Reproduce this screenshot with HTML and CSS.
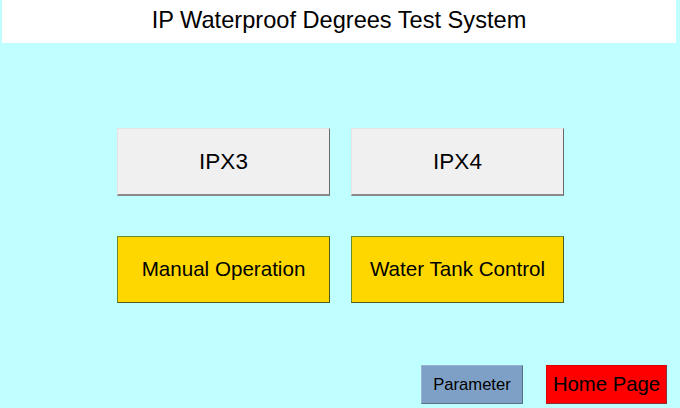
FILE: index.html
```html
<!DOCTYPE html>
<html>
<head>
<meta charset="utf-8">
<link rel="stylesheet" href="styles.css">
</head>
<body>
<div class="screen">
  <header class="title-bar">IP Waterproof Degrees Test System</header>
  <main class="menu">
    <div class="btn btn-gray">IPX3</div>
    <div class="btn btn-gray">IPX4</div>
    <div class="btn btn-yellow">Manual Operation</div>
    <div class="btn btn-yellow">Water Tank Control</div>
  </main>
  <footer class="nav">
    <div class="nav-btn nav-param">Parameter</div>
    <div class="nav-btn nav-home">Home Page</div>
  </footer>
</div>
</body>
</html>
```
FILE: styles.css
```css
html, body {
  margin: 0;
  padding: 0;
}
body {
  background: #bfffff;
  font-family: "Liberation Sans", Arial, sans-serif;
  color: #000;
}
.screen {
  width: 680px;
  height: 408px;
  display: flex;
  flex-direction: column;
  overflow: hidden;
}
.title-bar {
  margin: 0 4px 0 2px;
  height: 43px;
  background: #ffffff;
  display: flex;
  align-items: center;
  justify-content: center;
  font-size: 23.6px;
  padding-bottom: 3px;
  box-sizing: border-box;
}
.menu {
  display: grid;
  grid-template-columns: 213px 213px;
  grid-template-rows: 68px 67px;
  column-gap: 21px;
  row-gap: 40px;
  padding: 85px 0 0 117px;
}
.btn {
  display: flex;
  align-items: center;
  justify-content: center;
  box-sizing: border-box;
}
.btn-gray {
  background: #f0f0f0;
  border-top: 1px solid #e4e4e4;
  border-left: 1px solid #e4e4e4;
  border-right: 1px solid #6a6a6a;
  border-bottom: 2px solid #8a8a8a;
  font-size: 22.5px;
}
.btn-yellow {
  background: #ffd700;
  border: 1px solid #6b8a2a;
  border-right-color: #4d5a20;
  border-bottom-color: #4d5a20;
  font-size: 20.6px;
  padding-bottom: 2px;
}
.nav {
  display: flex;
  justify-content: flex-end;
  gap: 23px;
  padding-right: 13px;
  margin-top: 62px;
}
.nav-btn {
  height: 39px;
  display: flex;
  align-items: center;
  justify-content: center;
  box-sizing: border-box;
}
.nav-param {
  width: 102px;
  background: #7fa0c6;
  border: 1px solid #9ab4d0;
  border-right-color: #5a6e84;
  border-bottom-color: #5a6e84;
  font-size: 16.6px;
}
.nav-home {
  width: 121px;
  background: #ff0000;
  border: 1px solid #e00000;
  border-right-color: #8a3030;
  border-bottom-color: #8a3030;
  font-size: 20.3px;
}
```
